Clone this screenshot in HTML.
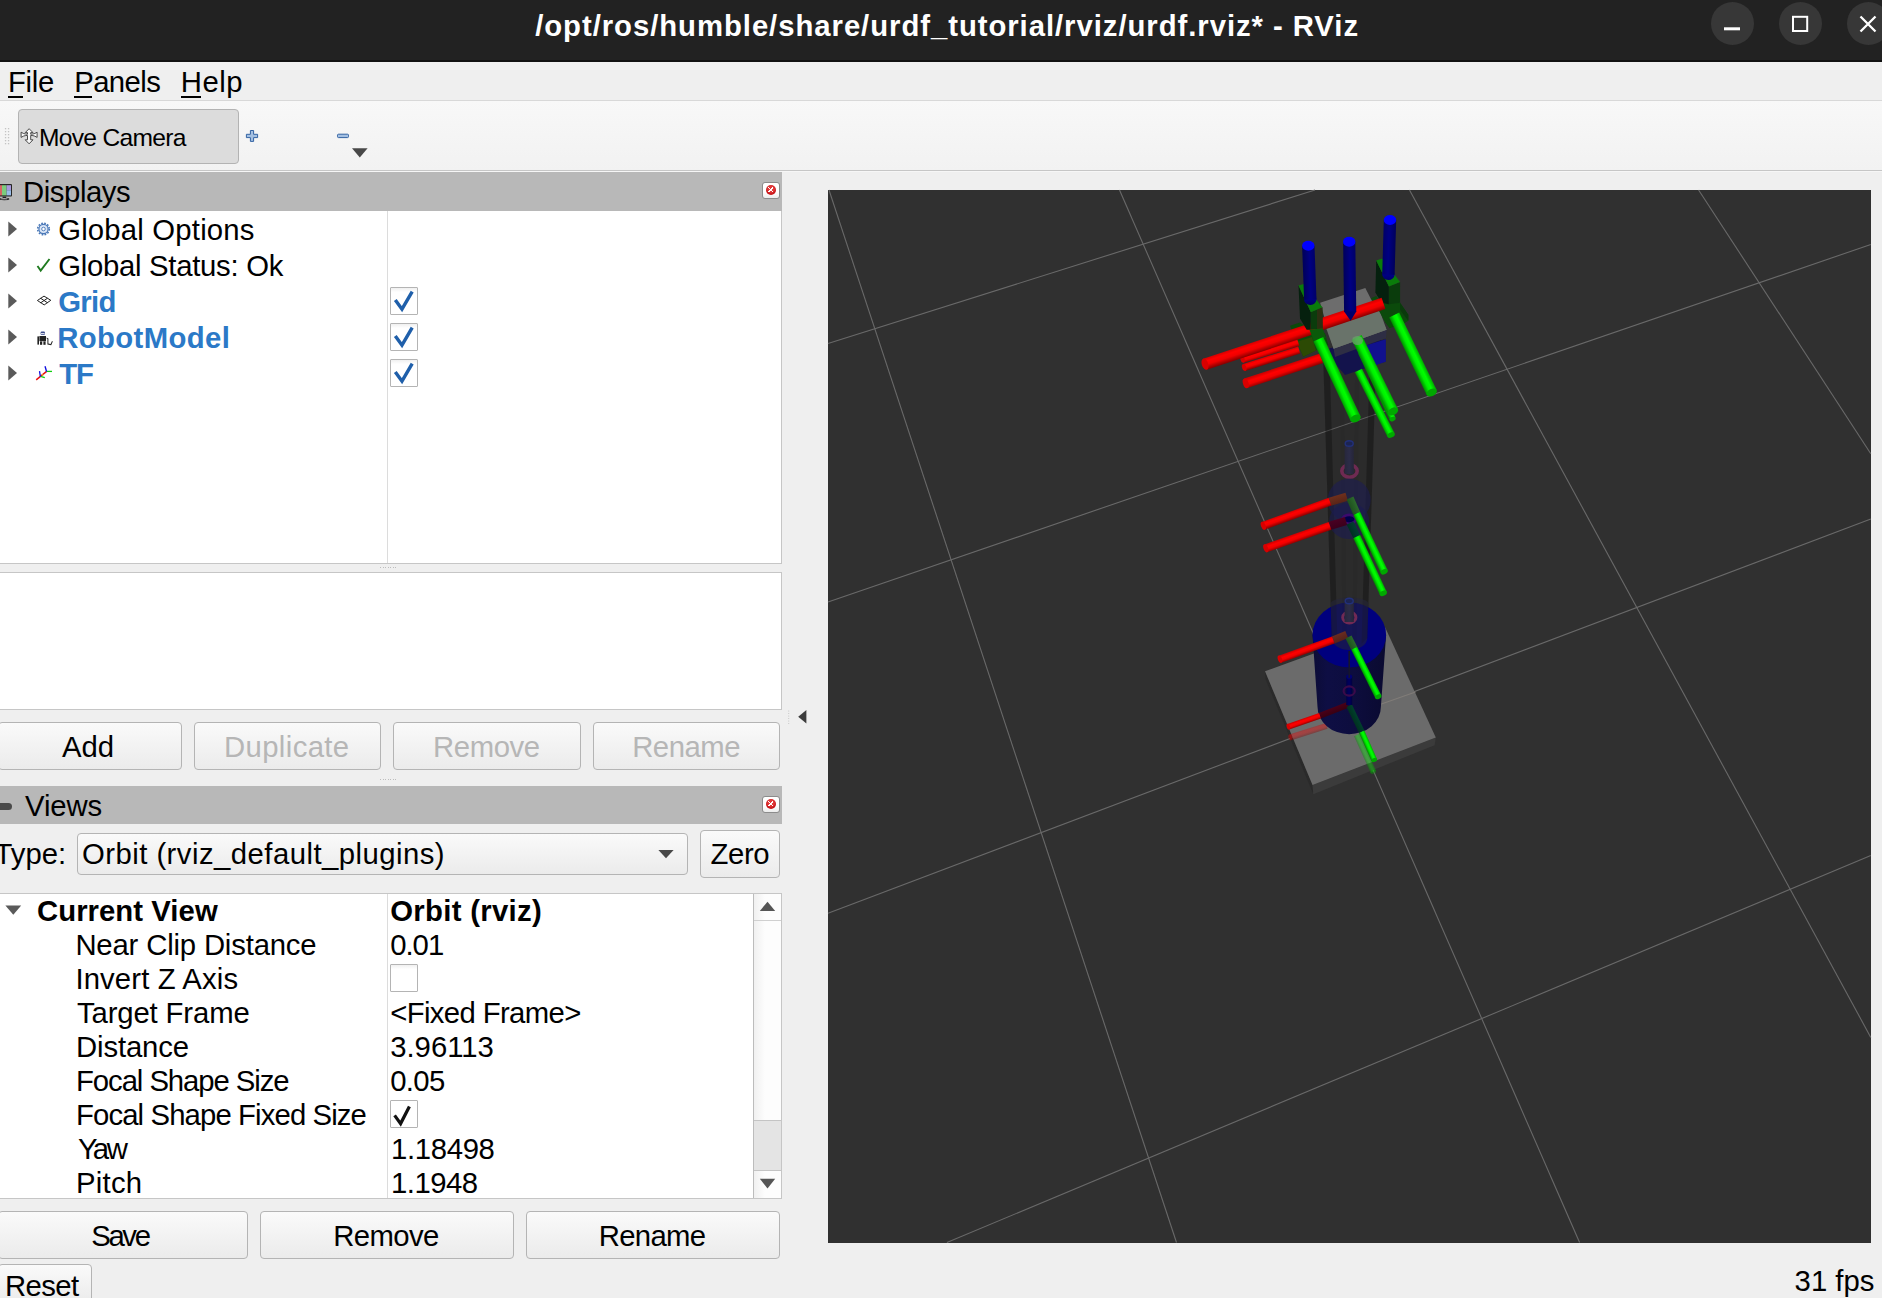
<!DOCTYPE html>
<html lang="en">
<head>
<meta charset="utf-8">
<title>RViz</title>
<style>
*{box-sizing:border-box;margin:0;padding:0}
html,body{width:1882px;height:1298px;overflow:hidden}
body{position:relative;background:#efefef;font-family:"Liberation Sans","DejaVu Sans",sans-serif;font-size:29.3px;color:#000}
.a{position:absolute}
.t{position:absolute;white-space:nowrap;line-height:1}
.t u{text-decoration:none}
.ul{position:absolute;height:2px;background:#000;top:96px}
#titlebar{left:0;top:0;width:1882px;height:62px;background:#222222;border-bottom:2px solid #111}
.wb{position:absolute;width:43px;height:43px;border-radius:50%;background:#373737;top:2px}
#menusep{left:0;top:100px;width:1882px;height:1px;background:#d8d8d8}
#toolbar{left:0;top:101px;width:1882px;height:69px;background:linear-gradient(#f8f8f8,#f2f2f2)}
#toolsep{left:0;top:170px;width:1882px;height:2px;background:linear-gradient(#c6c6c6 50%,#f6f6f6 50%)}
#toolbtn{left:18px;top:109px;width:221px;height:55px;border:1px solid #b3b3b3;border-radius:4px;background:#dcdcdc}
.hdr{position:absolute;left:0;width:782px;background:#b8b8b8}
.white{position:absolute;background:#fff;border:1px solid #c6c6c6}
.btn{position:absolute;border:1px solid #b4b4b4;border-radius:4px;background:linear-gradient(#fafafa,#ebebeb)}
.closeb{position:absolute;width:17.5px;height:16.8px;border:1px solid #8c8c8c;border-radius:3px;background:linear-gradient(#fff 60%,#ececec)}
.closeb i{position:absolute;left:2.6px;top:1.9px;width:10.4px;height:10.4px;border-radius:50%;background:linear-gradient(45deg,transparent 41%,#fff 41% 59%,transparent 59%) center/5.4px 5.4px no-repeat,linear-gradient(-45deg,transparent 41%,#fff 41% 59%,transparent 59%) center/5.4px 5.4px no-repeat,radial-gradient(circle at 50% 40%,#e23a3a 0 3px,#c81418 5px)}
.cb{position:absolute;width:28px;height:28px;border:1px solid #b4b4b4;background:linear-gradient(#f0f0f0,#fff 16%);border-radius:1px}
.vline{position:absolute;width:1px;background:#dcdcdc}
svg{position:absolute;overflow:visible}
</style>
</head>
<body>
<div id="titlebar" class="a"></div>
<div class="wb" style="left:1710.5px"></div>
<div class="wb" style="left:1778.5px"></div>
<div class="wb" style="left:1846.5px"></div>
<svg style="left:1700px;top:0" width="182" height="62" viewBox="1700 0 182 62">
<rect x="1724" y="27.3" width="16" height="3" fill="#fff"/>
<rect x="1793" y="16.8" width="14.2" height="14.2" fill="none" stroke="#fff" stroke-width="2"/>
<path d="M1860.5 16.5 L1875.5 31.5 M1875.5 16.5 L1860.5 31.5" stroke="#fff" stroke-width="2.3" fill="none"/>
</svg>
<div id="menusep" class="a"></div>
<div id="toolbar" class="a"></div>
<div id="toolsep" class="a"></div>
<div class="ul" style="left:8px;width:15px"></div>
<div class="ul" style="left:74px;width:18px"></div>
<div class="ul" style="left:181px;width:20px"></div>
<div id="toolbtn" class="a"></div>
<svg style="left:0;top:101px" width="400" height="69" viewBox="0 101 400 69">
<g fill="#c4c4c4"><rect x="4.9" y="128.0" width="1.3" height="1.3"/><rect x="7.9" y="128.0" width="1.3" height="1.3"/><rect x="4.9" y="131.0" width="1.3" height="1.3"/><rect x="7.9" y="131.0" width="1.3" height="1.3"/><rect x="4.9" y="134.0" width="1.3" height="1.3"/><rect x="7.9" y="134.0" width="1.3" height="1.3"/><rect x="4.9" y="137.0" width="1.3" height="1.3"/><rect x="7.9" y="137.0" width="1.3" height="1.3"/><rect x="4.9" y="140.0" width="1.3" height="1.3"/><rect x="7.9" y="140.0" width="1.3" height="1.3"/><rect x="4.9" y="143.0" width="1.3" height="1.3"/><rect x="7.9" y="143.0" width="1.3" height="1.3"/></g>
<g fill="#fafafa" stroke="#4a4a4a" stroke-width="1" stroke-linejoin="round"><path d="M29.1 128.7 l3.9 3.9 h-2.3 v1.6 c1.6 0 3 -0.3 4.2 -0.8 l2.2 -1.2 v5.2 l-2.2 -1.2 c-1.2 -0.5 -2.6 -0.8 -4.2 -0.8 v4.4 h2.3 l-3.9 4 l-3.9 -4 h2.3 v-4.4 c-1.6 0 -3 0.3 -4.2 0.8 l-2.2 1.2 v-5.2 l2.2 1.2 c1.2 0.5 2.6 0.8 4.2 0.8 v-1.6 h-2.3 z"/></g>
<path d="M250.4 130.5 h3.2 v3.8 h4 v3.3 h-4 v3.8 h-3.2 v-3.8 h-4 v-3.3 h4 z" fill="#a4c0e2" stroke="#3363a3" stroke-width="1"/>
<rect x="337.5" y="134.2" width="11" height="3.4" rx="1" fill="#a4c0e2" stroke="#3363a3" stroke-width="1"/>
<path d="M352 148.2 h15.6 l-7.8 9.2 z" fill="#484848"/>
</svg>
<!-- Displays panel -->
<div class="hdr" style="top:172px;height:39px"></div>
<div class="white" style="left:-1px;top:211px;width:783px;height:353px;border-top:none"></div>
<div class="vline" style="left:387px;top:211px;height:352px"></div>
<div class="closeb" style="left:762.2px;top:182px"><i></i></div>
<svg style="left:0;top:172px" width="60" height="220" viewBox="0 172 60 220">
<rect x="-3" y="184" width="15" height="12.6" rx="1" fill="#262626"/>
<rect x="-2" y="185.2" width="4" height="10.2" fill="#d66464"/><rect x="2" y="185.2" width="4.6" height="10.2" fill="#7ccc7c"/><rect x="6.6" y="185.2" width="4.4" height="5" fill="#a898dc"/><rect x="6.6" y="190.2" width="4.4" height="5.2" fill="#98bce8"/>
<path d="M2.6 196.6 h3.6 v1.6 h-3.6 z" fill="#222"/><ellipse cx="4.2" cy="199" rx="5.2" ry="1.2" fill="#222"/><ellipse cx="4.2" cy="198.7" rx="3.6" ry="0.5" fill="#ddd"/>
<g fill="#5a5a5a"><path d="M8.3 221.6 l8.7 7.4 l-8.7 7.4 z"/><path d="M8.3 257.6 l8.7 7.4 l-8.7 7.4 z"/><path d="M8.3 293.6 l8.7 7.4 l-8.7 7.4 z"/><path d="M8.3 329.6 l8.7 7.4 l-8.7 7.4 z"/><path d="M8.3 365.6 l8.7 7.4 l-8.7 7.4 z"/></g>
<circle cx="43.5" cy="229" r="4.6" fill="#dbe6f6" stroke="#4a78b8" stroke-width="1.2"/><circle cx="43.5" cy="229" r="5.8" fill="none" stroke="#4a78b8" stroke-width="1.6" stroke-dasharray="1.7 1.34"/><circle cx="43.5" cy="229" r="1.8" fill="#fff" stroke="#4a78b8" stroke-width="0.9"/>
<path d="M37.5 266 l3.2 4.6 l8.8 -11.6" fill="none" stroke="#1f7a1f" stroke-width="1.9"/>
<path d="M37.4 300.5 l6.6 -4.4 l6.8 4.2 l-6.6 4.6 z M40.7 298.3 l6.7 4.4 M47.4 298.3 l-6.7 4.5" fill="#fff" stroke="#222" stroke-width="1"/>
<g fill="#222"><rect x="40.6" y="331.6" width="4.4" height="3.4" rx="1.2" fill="#3c4c8c"/><rect x="41" y="333.2" width="3.6" height="1" fill="#fff"/><rect x="39.4" y="336" width="6.6" height="5.2"/><rect x="37.4" y="336.4" width="1.6" height="8.2"/><rect x="40" y="341.4" width="2.2" height="3.4"/><rect x="43.4" y="341.4" width="2.2" height="3.4"/><path d="M46.6 337.4 l1.8 1 v5 l2.2 0.6 l1.4 -3 l0.8 0.4 l-1.6 3.8 l-3.8 -0.8 v-5.4 l-0.8 -0.4 z"/></g>
<g fill="none" stroke-linecap="butt"><path d="M46.6 371.4 L36.2 379.8" stroke="#e81010" stroke-width="1.5"/><path d="M46.6 371.4 H52" stroke="#10d010" stroke-width="1.3"/><path d="M46.6 371.6 L45 366.2" stroke="#1010e0" stroke-width="1.4"/><path d="M40.6 376.4 L44.8 377.7" stroke="#10d010" stroke-width="1.3"/><path d="M40.4 376.6 L39.5 371.2" stroke="#1010e0" stroke-width="1.3"/><circle cx="42.6" cy="374.8" r="0.9" fill="#e8a020" stroke="none"/></g>
</svg>
<div class="cb" style="left:390px;top:287px"></div>
<div class="cb" style="left:390px;top:323px"></div>
<div class="cb" style="left:390px;top:359px"></div>
<svg style="left:390px;top:287px" width="28" height="100" viewBox="0 0 28 100">
<g fill="none" stroke="#1f5faa" stroke-width="3.4" stroke-linejoin="miter"><path d="M5.3 12.9 L12 22.2 L22.2 4.7"/><path d="M5.3 48.9 L12 58.2 L22.2 40.7"/><path d="M5.3 84.9 L12 94.2 L22.2 76.7"/></g>
</svg>
<!-- splitter dots + description box -->
<div class="a" style="left:380px;top:566.5px;width:16px;height:1px;background:repeating-linear-gradient(90deg,#bdbdbd 0 1px,transparent 1px 2.5px)"></div>
<div class="white" style="left:-1px;top:572px;width:783px;height:138px"></div>
<div class="btn" style="left:-2px;top:722px;width:184px;height:48px"></div>
<div class="btn" style="left:194px;top:722px;width:187px;height:48px"></div>
<div class="btn" style="left:393px;top:722px;width:188px;height:48px"></div>
<div class="btn" style="left:593px;top:722px;width:187px;height:48px"></div>
<div class="a" style="left:380px;top:779px;width:16px;height:1px;background:repeating-linear-gradient(90deg,#bdbdbd 0 1px,transparent 1px 2.5px)"></div>
<!-- Views panel -->
<div class="hdr" style="top:786px;height:37.5px"></div>
<div class="a" style="left:-3px;top:802.5px;width:14.5px;height:7.5px;border-radius:3.5px;background:#4a4a4a"></div>
<div class="closeb" style="left:762.2px;top:796px"><i></i></div>
<div class="btn" style="left:77px;top:833px;width:611px;height:42px"></div>
<div class="btn" style="left:700px;top:830px;width:80px;height:48px"></div>
<svg style="left:650px;top:840px" width="40" height="30" viewBox="650 840 40 30"><path d="M658.4 850 h15.2 l-7.6 8.2 z" fill="#484848"/></svg>
<div class="white" style="left:-1px;top:892.5px;width:783px;height:306px"></div>
<div class="vline" style="left:387px;top:893.5px;height:304px"></div>
<div class="a" style="left:753px;top:893.5px;width:28px;height:304px;background:linear-gradient(90deg,#f0f0f0,#fdfdfd 40%);border-left:1px solid #bcbcbc"></div>
<div class="a" style="left:754px;top:919.5px;width:27px;height:1px;background:#d0d0d0"></div>
<div class="a" style="left:754px;top:1120px;width:27px;height:50.5px;background:#e4e4e4;border-top:1px solid #c4c4c4;border-bottom:1px solid #c4c4c4"></div>
<svg style="left:0;top:893px" width="782" height="305" viewBox="0 893 782 305">
<path d="M5.4 905.4 h15.8 l-7.9 9.4 z" fill="#5a5a5a"/>
<path d="M759.8 911 h15.4 l-7.7 -9.2 z" fill="#555"/>
<path d="M759.8 1178.8 h15.4 l-7.7 9.6 z" fill="#555"/>
<path d="M394.6 1115.4 L400.6 1123.6 L409.4 1106.4" fill="none" stroke="#111" stroke-width="3.2"/>
</svg>
<div class="cb" style="left:390px;top:964px"></div>
<div class="cb" style="left:390px;top:1100px;background:transparent"></div>
<div class="btn" style="left:-2px;top:1211px;width:250px;height:48px"></div>
<div class="btn" style="left:260px;top:1211px;width:254px;height:48px"></div>
<div class="btn" style="left:526px;top:1211px;width:254px;height:48px"></div>
<div class="btn" style="left:-2px;top:1264px;width:94px;height:40px"></div>
<!-- collapse handle -->
<svg style="left:784px;top:700px" width="30" height="30" viewBox="784 700 30 30"><path d="M806.4 710 v13.6 l-8.2 -6.8 z" fill="#3c3c3c"/><g fill="#c4c4c4"><circle cx="788.7" cy="711" r="0.6"/><circle cx="788.7" cy="713.5" r="0.6"/><circle cx="788.7" cy="716" r="0.6"/><circle cx="788.7" cy="718.5" r="0.6"/><circle cx="788.7" cy="721" r="0.6"/><circle cx="788.7" cy="723.5" r="0.6"/></g></svg>

<div class="t" id="title" style="left:535.20px;top:11.00px;font-size:29.3px;letter-spacing:0.947px;font-weight:bold;color:#ffffff">/opt/ros/humble/share/urdf_tutorial/rviz/urdf.rviz* - RViz</div>
<div class="t" id="m_file" style="left:8.00px;top:67.00px;font-size:29.3px;letter-spacing:-0.333px"><u>F</u>ile</div>
<div class="t" id="m_panels" style="left:74.20px;top:67.00px;font-size:29.3px;letter-spacing:-0.600px"><u>P</u>anels</div>
<div class="t" id="m_help" style="left:180.80px;top:67.00px;font-size:29.3px;letter-spacing:0.500px"><u>H</u>elp</div>
<div class="t" id="movecam" style="left:39.00px;top:126.00px;font-size:24.6px;letter-spacing:-0.700px">Move Camera</div>
<div class="t" id="displays" style="left:23.00px;top:177.00px;font-size:29.3px;letter-spacing:-0.429px">Displays</div>
<div class="t" id="gopt" style="left:58.20px;top:215.00px;font-size:29.3px;letter-spacing:0.192px">Global Options</div>
<div class="t" id="gstat" style="left:58.20px;top:251.00px;font-size:29.3px;letter-spacing:-0.281px">Global Status: Ok</div>
<div class="t" id="grid" style="left:58.20px;top:287.00px;font-size:29.3px;letter-spacing:-0.667px;font-weight:bold;color:#2b79c7">Grid</div>
<div class="t" id="robot" style="left:57.20px;top:323.00px;font-size:29.3px;letter-spacing:0.389px;font-weight:bold;color:#2b79c7">RobotModel</div>
<div class="t" id="tf" style="left:59.20px;top:359.00px;font-size:29.3px;letter-spacing:-1.100px;font-weight:bold;color:#2b79c7">TF</div>
<div class="t" id="add" style="left:62.00px;top:732.00px;font-size:29.3px;letter-spacing:0.000px">Add</div>
<div class="t" id="dup" style="left:224.00px;top:732.00px;font-size:29.3px;letter-spacing:0.375px;color:#b6b6b6">Duplicate</div>
<div class="t" id="rem1" style="left:433.00px;top:732.00px;font-size:29.3px;letter-spacing:-0.400px;color:#b6b6b6">Remove</div>
<div class="t" id="ren1" style="left:632.20px;top:732.00px;font-size:29.3px;letter-spacing:-0.500px;color:#b6b6b6">Rename</div>
<div class="t" id="views" style="left:25.00px;top:791.00px;font-size:29.3px;letter-spacing:-0.125px">Views</div>
<div class="t" id="type" style="left:-5.50px;top:839.00px;font-size:29.3px;letter-spacing:0.000px">Type:</div>
<div class="t" id="combo" style="left:82.00px;top:839.00px;font-size:29.3px;letter-spacing:0.463px">Orbit (rviz_default_plugins)</div>
<div class="t" id="zero" style="left:710.40px;top:839.00px;font-size:29.3px;letter-spacing:-0.333px">Zero</div>
<div class="t" id="cv" style="left:37.00px;top:896.00px;font-size:29.3px;letter-spacing:0.045px;font-weight:bold">Current View</div>
<div class="t" id="ncd" style="left:75.40px;top:930.00px;font-size:29.3px;letter-spacing:-0.176px">Near Clip Distance</div>
<div class="t" id="iza" style="left:75.40px;top:964.00px;font-size:29.3px;letter-spacing:0.125px">Invert Z Axis</div>
<div class="t" id="tfr" style="left:77.00px;top:998.00px;font-size:29.3px;letter-spacing:-0.136px">Target Frame</div>
<div class="t" id="dist" style="left:76.00px;top:1032.00px;font-size:29.3px;letter-spacing:-0.143px">Distance</div>
<div class="t" id="fss" style="left:76.00px;top:1066.00px;font-size:29.3px;letter-spacing:-1.067px">Focal Shape Size</div>
<div class="t" id="fsfs" style="left:76.00px;top:1100.00px;font-size:29.3px;letter-spacing:-0.881px">Focal Shape Fixed Size</div>
<div class="t" id="yaw" style="left:78.00px;top:1134.00px;font-size:29.3px;letter-spacing:-2.500px">Yaw</div>
<div class="t" id="pitch" style="left:76.00px;top:1168.00px;font-size:29.3px;letter-spacing:0.250px">Pitch</div>
<div class="t" id="v_cv" style="left:390.20px;top:896.00px;font-size:29.3px;letter-spacing:0.318px;font-weight:bold">Orbit (rviz)</div>
<div class="t" id="v_ncd" style="left:390.20px;top:930.00px;font-size:29.3px;letter-spacing:-1.000px">0.01</div>
<div class="t" id="v_tfr" style="left:390.20px;top:998.00px;font-size:29.3px;letter-spacing:-0.625px">&lt;Fixed Frame&gt;</div>
<div class="t" id="v_dist" style="left:390.20px;top:1032.00px;font-size:29.3px;letter-spacing:0.000px">3.96113</div>
<div class="t" id="v_fss" style="left:390.20px;top:1066.00px;font-size:29.3px;letter-spacing:-0.667px">0.05</div>
<div class="t" id="v_yaw" style="left:391.00px;top:1134.00px;font-size:29.3px;letter-spacing:-0.333px">1.18498</div>
<div class="t" id="v_pitch" style="left:391.00px;top:1168.00px;font-size:29.3px;letter-spacing:-0.500px">1.1948</div>
<div class="t" id="save" style="left:91.20px;top:1221.00px;font-size:29.3px;letter-spacing:-2.333px">Save</div>
<div class="t" id="rem2" style="left:333.20px;top:1221.00px;font-size:29.3px;letter-spacing:-0.600px">Remove</div>
<div class="t" id="ren2" style="left:598.80px;top:1221.00px;font-size:29.3px;letter-spacing:-0.700px">Rename</div>
<div class="t" id="reset" style="left:5.00px;top:1271.00px;font-size:29.3px;letter-spacing:-0.625px">Reset</div>
<div class="t" id="fps" style="left:1794.60px;top:1266.00px;font-size:29.3px;letter-spacing:0.000px">31 fps</div>
<svg id="vp" style="left:828px;top:190px" width="1043" height="1053" viewBox="828 190 1043 1053">
<defs><linearGradient id="g1" gradientUnits="userSpaceOnUse" x1="1325.8" y1="722.9" x2="1327.6" y2="728.7"><stop offset="0" stop-color="#d00000"/><stop offset="0.3" stop-color="#ff0000"/><stop offset="0.6" stop-color="#f00000"/><stop offset="1" stop-color="#8a0000"/></linearGradient><linearGradient id="g2" gradientUnits="userSpaceOnUse" x1="1359.4" y1="733.8" x2="1354" y2="736.2"><stop offset="0" stop-color="#00b000"/><stop offset="0.35" stop-color="#00ff00"/><stop offset="0.6" stop-color="#00f000"/><stop offset="1" stop-color="#008800"/></linearGradient><linearGradient id="bc" x1="0" y1="0" x2="1" y2="0"><stop offset="0" stop-color="#0c0c36"/><stop offset="0.2" stop-color="#0e0e44"/><stop offset="0.55" stop-color="#0d0d3e"/><stop offset="1" stop-color="#0a0a30"/></linearGradient><linearGradient id="g3" gradientUnits="userSpaceOnUse" x1="1346.4" y1="702.2" x2="1348.6" y2="707.8"><stop offset="0" stop-color="#4a0018"/><stop offset="1" stop-color="#380012"/></linearGradient><linearGradient id="g4" gradientUnits="userSpaceOnUse" x1="1351.9" y1="704.5" x2="1346.5" y2="707.1"><stop offset="0" stop-color="#00402c"/><stop offset="1" stop-color="#003020"/></linearGradient><linearGradient id="g5" gradientUnits="userSpaceOnUse" x1="1319" y1="713" x2="1321" y2="718.6"><stop offset="0" stop-color="#d00000"/><stop offset="0.3" stop-color="#ff0000"/><stop offset="0.6" stop-color="#f00000"/><stop offset="1" stop-color="#8a0000"/></linearGradient><linearGradient id="g6" gradientUnits="userSpaceOnUse" x1="1364.4" y1="730.5" x2="1359" y2="732.9"><stop offset="0" stop-color="#00b000"/><stop offset="0.35" stop-color="#00ff00"/><stop offset="0.6" stop-color="#00f000"/><stop offset="1" stop-color="#008800"/></linearGradient><linearGradient id="g7" gradientUnits="userSpaceOnUse" x1="1346.2" y1="705" x2="1352.2" y2="705"><stop offset="0" stop-color="#000048"/><stop offset="0.5" stop-color="#000060"/><stop offset="1" stop-color="#000040"/></linearGradient><linearGradient id="g8" gradientUnits="userSpaceOnUse" x1="1344.6" y1="474" x2="1353.8" y2="474"><stop offset="0" stop-color="#27273c"/><stop offset="0.5" stop-color="#2c2c48"/><stop offset="1" stop-color="#252538"/></linearGradient><linearGradient id="g9" gradientUnits="userSpaceOnUse" x1="1345.5" y1="492.7" x2="1347.9" y2="500.7"><stop offset="0" stop-color="#70301c"/><stop offset="1" stop-color="#582418"/></linearGradient><linearGradient id="g10" gradientUnits="userSpaceOnUse" x1="1344.8" y1="517" x2="1347.2" y2="525"><stop offset="0" stop-color="#4a0022"/><stop offset="1" stop-color="#3a001c"/></linearGradient><linearGradient id="g11" gradientUnits="userSpaceOnUse" x1="1328.6" y1="497.8" x2="1331.4" y2="505.6"><stop offset="0" stop-color="#d00000"/><stop offset="0.3" stop-color="#ff0000"/><stop offset="0.6" stop-color="#f00000"/><stop offset="1" stop-color="#8a0000"/></linearGradient><linearGradient id="g12" gradientUnits="userSpaceOnUse" x1="1328.6" y1="521.9" x2="1331.4" y2="529.7"><stop offset="0" stop-color="#d00000"/><stop offset="0.3" stop-color="#ff0000"/><stop offset="0.6" stop-color="#f00000"/><stop offset="1" stop-color="#8a0000"/></linearGradient><linearGradient id="g13" gradientUnits="userSpaceOnUse" x1="1353.4" y1="496.5" x2="1346.6" y2="499.5"><stop offset="0" stop-color="#2c6a2c"/><stop offset="1" stop-color="#1e501e"/></linearGradient><linearGradient id="g14" gradientUnits="userSpaceOnUse" x1="1353.4" y1="521.4" x2="1346.6" y2="524.6"><stop offset="0" stop-color="#004030"/><stop offset="1" stop-color="#003024"/></linearGradient><linearGradient id="g15" gradientUnits="userSpaceOnUse" x1="1360.1" y1="511.7" x2="1353.3" y2="514.9"><stop offset="0" stop-color="#00b000"/><stop offset="0.35" stop-color="#00ff00"/><stop offset="0.6" stop-color="#00f000"/><stop offset="1" stop-color="#008800"/></linearGradient><linearGradient id="g16" gradientUnits="userSpaceOnUse" x1="1360.1" y1="535.1" x2="1353.3" y2="538.3"><stop offset="0" stop-color="#00b000"/><stop offset="0.35" stop-color="#00ff00"/><stop offset="0.6" stop-color="#00f000"/><stop offset="1" stop-color="#008800"/></linearGradient><linearGradient id="g17" gradientUnits="userSpaceOnUse" x1="1344.6" y1="622" x2="1353.8" y2="622"><stop offset="0" stop-color="#27273c"/><stop offset="0.5" stop-color="#2c2c48"/><stop offset="1" stop-color="#252538"/></linearGradient><linearGradient id="g18" gradientUnits="userSpaceOnUse" x1="1345.3" y1="631" x2="1348.1" y2="638"><stop offset="0" stop-color="#6a2c20"/><stop offset="1" stop-color="#54221a"/></linearGradient><linearGradient id="g19" gradientUnits="userSpaceOnUse" x1="1332" y1="636.5" x2="1334.6" y2="643.5"><stop offset="0" stop-color="#d00000"/><stop offset="0.3" stop-color="#ff0000"/><stop offset="0.6" stop-color="#f00000"/><stop offset="1" stop-color="#8a0000"/></linearGradient><linearGradient id="g20" gradientUnits="userSpaceOnUse" x1="1351.5" y1="635.5" x2="1345.5" y2="638.5"><stop offset="0" stop-color="#2a6a2a"/><stop offset="1" stop-color="#1e501e"/></linearGradient><linearGradient id="g21" gradientUnits="userSpaceOnUse" x1="1357.2" y1="646.8" x2="1351.2" y2="649.8"><stop offset="0" stop-color="#00b000"/><stop offset="0.35" stop-color="#00ff00"/><stop offset="0.6" stop-color="#00f000"/><stop offset="1" stop-color="#008800"/></linearGradient><linearGradient id="g22" gradientUnits="userSpaceOnUse" x1="1381.6" y1="297.7" x2="1385.4" y2="309.1"><stop offset="0" stop-color="#d00000"/><stop offset="0.3" stop-color="#ff0000"/><stop offset="0.6" stop-color="#f00000"/><stop offset="1" stop-color="#8a0000"/></linearGradient><linearGradient id="g23" gradientUnits="userSpaceOnUse" x1="1297.2" y1="339" x2="1299.4" y2="346"><stop offset="0" stop-color="#d00000"/><stop offset="0.3" stop-color="#ff0000"/><stop offset="0.6" stop-color="#f00000"/><stop offset="1" stop-color="#8a0000"/></linearGradient><linearGradient id="g24" gradientUnits="userSpaceOnUse" x1="1298.1" y1="346.5" x2="1300.3" y2="353.5"><stop offset="0" stop-color="#d00000"/><stop offset="0.3" stop-color="#ff0000"/><stop offset="0.6" stop-color="#f00000"/><stop offset="1" stop-color="#8a0000"/></linearGradient><linearGradient id="g25" gradientUnits="userSpaceOnUse" x1="1320.1" y1="353.6" x2="1323.3" y2="363"><stop offset="0" stop-color="#d00000"/><stop offset="0.3" stop-color="#ff0000"/><stop offset="0.6" stop-color="#f00000"/><stop offset="1" stop-color="#8a0000"/></linearGradient><linearGradient id="g26" gradientUnits="userSpaceOnUse" x1="1310.2" y1="323.3" x2="1313.8" y2="334.3"><stop offset="0" stop-color="#d00000"/><stop offset="0.3" stop-color="#ff0000"/><stop offset="0.6" stop-color="#f00000"/><stop offset="1" stop-color="#8a0000"/></linearGradient><linearGradient id="g27" gradientUnits="userSpaceOnUse" x1="1316.5" y1="299.3" x2="1304.1" y2="299.7"><stop offset="0" stop-color="#000068"/><stop offset="0.45" stop-color="#000082"/><stop offset="1" stop-color="#00005a"/></linearGradient><linearGradient id="g28" gradientUnits="userSpaceOnUse" x1="1382.2" y1="274.3" x2="1394.6" y2="274.7"><stop offset="0" stop-color="#000068"/><stop offset="0.45" stop-color="#000082"/><stop offset="1" stop-color="#00005a"/></linearGradient><linearGradient id="g29" gradientUnits="userSpaceOnUse" x1="1356.3" y1="311.9" x2="1344.1" y2="312.1"><stop offset="0" stop-color="#000068"/><stop offset="0.45" stop-color="#000082"/><stop offset="1" stop-color="#00005a"/></linearGradient><linearGradient id="g30" gradientUnits="userSpaceOnUse" x1="1323.3" y1="336.9" x2="1313.3" y2="341.5"><stop offset="0" stop-color="#00b000"/><stop offset="0.35" stop-color="#00ff00"/><stop offset="0.6" stop-color="#00f000"/><stop offset="1" stop-color="#008800"/></linearGradient><linearGradient id="g31" gradientUnits="userSpaceOnUse" x1="1363.9" y1="350.6" x2="1358.1" y2="353.4"><stop offset="0" stop-color="#00b000"/><stop offset="0.35" stop-color="#00ff00"/><stop offset="0.6" stop-color="#00f000"/><stop offset="1" stop-color="#008800"/></linearGradient><linearGradient id="g32" gradientUnits="userSpaceOnUse" x1="1362" y1="368.7" x2="1354.8" y2="372.3"><stop offset="0" stop-color="#00b000"/><stop offset="0.35" stop-color="#00ff00"/><stop offset="0.6" stop-color="#00f000"/><stop offset="1" stop-color="#008800"/></linearGradient><linearGradient id="g33" gradientUnits="userSpaceOnUse" x1="1361.6" y1="335.1" x2="1351.8" y2="339.9"><stop offset="0" stop-color="#00b000"/><stop offset="0.35" stop-color="#00ff00"/><stop offset="0.6" stop-color="#00f000"/><stop offset="1" stop-color="#008800"/></linearGradient><linearGradient id="g34" gradientUnits="userSpaceOnUse" x1="1399.2" y1="312.6" x2="1389.2" y2="317.4"><stop offset="0" stop-color="#00b000"/><stop offset="0.35" stop-color="#00ff00"/><stop offset="0.6" stop-color="#00f000"/><stop offset="1" stop-color="#008800"/></linearGradient></defs>
<rect x="828" y="190" width="1043" height="1053" fill="#303030"/>
<line x1="829" y1="190" x2="1176.5" y2="1242.5" stroke="#696969" stroke-width="1.1"/>
<line x1="1119.5" y1="190" x2="1579.6" y2="1242.5" stroke="#696969" stroke-width="1.1"/>
<line x1="1409.5" y1="190" x2="1870.8" y2="1037.4" stroke="#696969" stroke-width="1.1"/>
<line x1="1698.6" y1="190" x2="1870.8" y2="453.7" stroke="#696969" stroke-width="1.1"/>
<line x1="828" y1="343.5" x2="1315" y2="190" stroke="#696969" stroke-width="1.1"/>
<line x1="828" y1="602" x2="1870.8" y2="244.5" stroke="#696969" stroke-width="1.1"/>
<line x1="828" y1="913.2" x2="1870.8" y2="519" stroke="#696969" stroke-width="1.1"/>
<line x1="946.9" y1="1242.5" x2="1870.8" y2="855.6" stroke="#696969" stroke-width="1.1"/>
<polygon points="1265,671.2 1312.5,785 1313.3,794.2 1265.6,679.5" fill="#2a2a2a"/>
<polygon points="1312.5,785 1435.8,737.5 1434.6,745.2 1313.3,794.2" fill="#3b3b3b"/>
<polygon points="1265,671.2 1385.2,627.5 1435.8,737.5 1312.5,785" fill="#6b6b6b"/>
<line x1="1380" y1="704.6" x2="1415.5" y2="692" stroke="#807c78" stroke-width="1.1"/>
<polygon points="1325.8,722.9 1289.1,734.6 1290.9,740.4 1327.6,728.7" fill="url(#g1)" opacity="0.38"/>
<ellipse cx="1290" cy="737.5" rx="1.7" ry="3" fill="#d80000" transform="rotate(162.3 1290 737.5)" opacity="0.38"/>
<polygon points="1359.4,733.8 1376,770.5 1370.6,772.9 1354,736.2" fill="url(#g2)" opacity="0.38"/>
<ellipse cx="1373.3" cy="771.7" rx="2" ry="3" fill="#00a800" transform="rotate(65.7 1373.3 771.7)" opacity="0.38"/>
<path d="M1312.5 635 L1317.5 706.7 A31.7 27.5 0 0 0 1380.9 706.7 L1386.1 635 Z" fill="url(#bc)"/>
<polygon points="1346.4,702.2 1318.9,713 1321.1,718.6 1348.6,707.8" fill="url(#g3)"/>
<polygon points="1351.9,704.5 1364.4,730.4 1359,733 1346.5,707.1" fill="url(#g4)"/>
<polygon points="1319,713 1287.3,723.9 1289.3,729.5 1321,718.6" fill="url(#g5)"/>
<ellipse cx="1288.3" cy="726.7" rx="1.7" ry="3" fill="#d80000" transform="rotate(161 1288.3 726.7)"/>
<polygon points="1364.4,730.5 1376.9,758.8 1371.5,761.2 1359,732.9" fill="url(#g6)"/>
<ellipse cx="1374.2" cy="760" rx="2" ry="3" fill="#00a800" transform="rotate(66.2 1374.2 760)"/>
<ellipse cx="1349.3" cy="635" rx="36.8" ry="32.5" fill="#00007e"/>
<polygon points="1346.2,705 1346.2,676.7 1352.2,676.7 1352.2,705" fill="url(#g7)"/>
<ellipse cx="1349.2" cy="676.7" rx="3" ry="2.2" fill="#000070"/>
<ellipse cx="1349.2" cy="691" rx="5.6" ry="4.6" fill="none" stroke="#3a0a4a" stroke-width="2.2"/>
<path d="M1323 352 L1331.7 638 A17.8 12 0 0 0 1367.3 638 L1376.4 352 Z" fill="#000" opacity="0.09"/>
<path d="M1323 352 L1331.7 638 L1337.5 644 L1329.5 352 Z" fill="#000" opacity="0.27"/>
<path d="M1376.4 352 L1367.3 638 L1361.5 644 L1370 352 Z" fill="#000" opacity="0.27"/>
<path d="M1330.6 603 L1331.7 638 A17.8 12 0 0 0 1367.3 638 L1368.4 603 A19 6 0 0 0 1330.6 603 Z" fill="#26263c" opacity="0.55"/>
<line x1="1342" y1="380" x2="1344.5" y2="640" stroke="#000" stroke-width="4" opacity="0.04"/>
<line x1="1357" y1="380" x2="1354.5" y2="640" stroke="#000" stroke-width="4" opacity="0.04"/>
<ellipse cx="1349.5" cy="471" rx="7.7" ry="6.2" fill="none" stroke="#6e2a52" stroke-width="3.6"/>
<polygon points="1344.6,474 1344.6,443.5 1353.8,443.5 1353.8,474" fill="url(#g8)"/>
<ellipse cx="1349.2" cy="443.5" rx="4" ry="2.8" fill="#1c2452" stroke="#22307a" stroke-width="1.4"/>
<ellipse cx="1349.2" cy="500" rx="21.5" ry="21.5" fill="#1c1c56" opacity="0.55"/>
<ellipse cx="1349.2" cy="521" rx="20" ry="18" fill="#1a1a52" opacity="0.6"/>
<ellipse cx="1349.1" cy="519.3" rx="6.6" ry="4.4" fill="#00004a" stroke="#3c0a6e" stroke-width="2.6"/>
<polygon points="1345.5,492.7 1328.8,497.7 1331.2,505.7 1347.9,500.7" fill="url(#g9)"/>
<polygon points="1344.8,517 1328.8,521.8 1331.2,529.8 1347.2,525" fill="url(#g10)"/>
<polygon points="1328.6,497.8 1261.9,521.9 1264.7,529.7 1331.4,505.6" fill="url(#g11)"/>
<ellipse cx="1263.3" cy="525.8" rx="2.3" ry="4.2" fill="#d80000" transform="rotate(160.1 1263.3 525.8)"/>
<polygon points="1328.6,521.9 1264.4,544.4 1267.2,552.2 1331.4,529.7" fill="url(#g12)"/>
<ellipse cx="1265.8" cy="548.3" rx="2.3" ry="4.2" fill="#d80000" transform="rotate(160.7 1265.8 548.3)"/>
<polygon points="1353.4,496.5 1360.1,511.8 1353.3,514.8 1346.6,499.5" fill="url(#g13)"/>
<polygon points="1353.4,521.4 1360.1,535.1 1353.3,538.3 1346.6,524.6" fill="url(#g14)"/>
<polygon points="1360.1,511.7 1387.6,570.1 1380.8,573.3 1353.3,514.9" fill="url(#g15)"/>
<ellipse cx="1384.2" cy="571.7" rx="2.5" ry="3.8" fill="#00a800" transform="rotate(64.8 1384.2 571.7)"/>
<polygon points="1360.1,535.1 1386.7,591.7 1379.9,594.9 1353.3,538.3" fill="url(#g16)"/>
<ellipse cx="1383.3" cy="593.3" rx="2.5" ry="3.8" fill="#00a800" transform="rotate(64.8 1383.3 593.3)"/>
<ellipse cx="1349.3" cy="617.5" rx="6.6" ry="5.4" fill="none" stroke="#702a54" stroke-width="3"/>
<polygon points="1344.6,622 1344.6,601 1353.8,601 1353.8,622" fill="url(#g17)"/>
<ellipse cx="1349.2" cy="601" rx="4" ry="2.8" fill="#1c2452" stroke="#22307a" stroke-width="1.4"/>
<line x1="1349.2" y1="651" x2="1349.2" y2="678" stroke="#15152c" stroke-width="1.6"/>
<polygon points="1345.3,631 1331.9,636.5 1334.7,643.5 1348.1,638" fill="url(#g18)"/>
<polygon points="1332,636.5 1278.7,655.7 1281.3,662.7 1334.6,643.5" fill="url(#g19)"/>
<ellipse cx="1280" cy="659.2" rx="2.1" ry="3.8" fill="#d80000" transform="rotate(160.2 1280 659.2)"/>
<polygon points="1351.5,635.5 1357.2,646.8 1351.2,649.8 1345.5,638.5" fill="url(#g20)"/>
<polygon points="1357.2,646.8 1381.3,695.2 1375.3,698.2 1351.2,649.8" fill="url(#g21)"/>
<ellipse cx="1378.3" cy="696.7" rx="2.2" ry="3.4" fill="#00a800" transform="rotate(63.5 1378.3 696.7)"/>
<polygon points="1329.2,348.3 1385.8,339.2 1385.8,361.7 1375,365 1345,375 1331.7,360" fill="#13134c"/>
<polygon points="1366,345.5 1385.8,339.2 1385.8,361.7 1376,365" fill="#1212a4" opacity="0.75"/>
<polygon points="1333.6,348.8 1386.6,329.7 1386,338 1335,357" fill="#2e2e44"/>
<polygon points="1320.1,302.8 1365.3,287.9 1386.6,329.7 1333.6,348.8" fill="#6d6d6d"/>
<polygon points="1325,325 1378,306 1386.6,329.7 1333.6,348.8" fill="#69736a"/>
<polygon points="1371,298.3 1376.2,296.1 1381.4,302.8 1400.1,302.8 1408.3,314.8 1408.3,320.8 1404.6,323 1389.6,328.2 1385.1,322.3 1379.9,312.5" fill="#0b4a0b"/>
<polygon points="1400.1,302.8 1408.3,314.8 1408.3,320.8 1400.1,310" fill="#0a3a0c"/>
<polygon points="1376.2,260.6 1388.9,286.4 1388.9,304.3 1381.4,302.8 1375.4,292.4" fill="#05200e"/>
<polygon points="1388.9,286.4 1400.1,281.9 1400.1,302.8 1388.9,304.3" fill="#0a3c0c"/>
<polygon points="1376.2,260.6 1382.2,258.4 1400.1,281.9 1388.9,286.4" fill="#0a7c0a"/>
<polygon points="1381.6,297.7 1312.1,321.1 1315.9,332.5 1385.4,309.1" fill="url(#g22)"/>
<ellipse cx="1314" cy="326.8" rx="3.4" ry="6" fill="#d80000" transform="rotate(161.4 1314 326.8)"/>
<polygon points="1290,325.8 1300,322.5 1313.3,331.7 1325,333.3 1328.3,345 1313.3,351.7 1303.3,356.7 1296.7,341.7" fill="#0b4a0b"/>
<polygon points="1296.7,341.7 1312,337 1316,350.5 1303.3,356.7" fill="#2c4a04"/>
<polygon points="1297.2,339 1241.4,355.7 1243.6,362.7 1299.4,346" fill="url(#g23)"/>
<ellipse cx="1242.5" cy="359.2" rx="2.1" ry="3.7" fill="#d80000" transform="rotate(163.3 1242.5 359.2)"/>
<polygon points="1298.1,346.5 1243.1,364 1245.3,371 1300.3,353.5" fill="url(#g24)"/>
<ellipse cx="1244.2" cy="367.5" rx="2.1" ry="3.7" fill="#d80000" transform="rotate(162.3 1244.2 367.5)"/>
<polygon points="1320.1,353.6 1244.2,378.6 1247.4,388 1323.3,363" fill="url(#g25)"/>
<ellipse cx="1245.8" cy="383.3" rx="2.8" ry="5" fill="#d80000" transform="rotate(161.8 1245.8 383.3)"/>
<polygon points="1310.2,323.3 1203.2,358.7 1206.8,369.7 1313.8,334.3" fill="url(#g26)"/>
<ellipse cx="1205" cy="364.2" rx="3.2" ry="5.8" fill="#d80000" transform="rotate(161.7 1205 364.2)"/>
<polygon points="1298.5,285.6 1305.9,301.3 1310.8,312.2 1310.8,329.7 1306.7,329.7 1300,318.5" fill="#05200e"/>
<polygon points="1310.8,312.2 1322.4,307.3 1322.7,328.2 1310.8,329.7" fill="#0a3c0c"/>
<polygon points="1317,309.5 1322.4,307.3 1322.7,328.2 1317,329" fill="#3a2a14" opacity="0.7"/>
<polygon points="1298.5,285.6 1303.7,284 1322.4,307.3 1310.8,312.2" fill="#0a7c0a"/>
<polygon points="1309.5,329.7 1322.7,328.2 1326,338 1314,342" fill="#0a5a0a"/>
<ellipse cx="1310.3" cy="299.5" rx="5.6" ry="6.2" fill="url(#g27)" transform="rotate(-92.1 1310.3 299.5)"/>
<polygon points="1316.5,299.3 1314.5,245.6 1302.1,246 1304.1,299.7" fill="url(#g27)"/>
<ellipse cx="1308.3" cy="245.8" rx="6.2" ry="5" fill="#0000ff"/>
<ellipse cx="1388.4" cy="274.5" rx="5.6" ry="6.2" fill="url(#g28)" transform="rotate(-88.3 1388.4 274.5)"/>
<polygon points="1382.2,274.3 1383.8,219.8 1396.2,220.2 1394.6,274.7" fill="url(#g28)"/>
<ellipse cx="1390" cy="220" rx="6.2" ry="5" fill="#0000ff"/>
<polygon points="1356.3,311.9 1355.3,241.6 1343.1,241.8 1344.1,312.1" fill="url(#g29)"/>
<polygon points="1344.1,311.5 1356.3,311.5 1350.6,320.8" fill="#00006a"/>
<ellipse cx="1349.2" cy="241.7" rx="6.2" ry="5" fill="#0000ff"/>
<polygon points="1323.3,336.9 1360.5,416.2 1350.5,420.8 1313.3,341.5" fill="url(#g30)"/>
<ellipse cx="1355.5" cy="418.5" rx="3.6" ry="5.5" fill="#00a800" transform="rotate(64.9 1355.5 418.5)"/>
<polygon points="1363.9,350.6 1395.5,417.6 1389.7,420.4 1358.1,353.4" fill="url(#g31)"/>
<ellipse cx="1392.6" cy="419" rx="2.1" ry="3.2" fill="#00a800" transform="rotate(64.7 1392.6 419)"/>
<polygon points="1362,368.7 1394.6,433.2 1387.4,436.8 1354.8,372.3" fill="url(#g32)"/>
<ellipse cx="1391" cy="435" rx="2.6" ry="4" fill="#00a800" transform="rotate(63.2 1391 435)"/>
<polygon points="1361.6,335.1 1397.9,409 1388.1,413.8 1351.8,339.9" fill="url(#g33)"/>
<ellipse cx="1393" cy="411.4" rx="3.6" ry="5.5" fill="#00a800" transform="rotate(63.8 1393 411.4)"/>
<polygon points="1399.2,312.6 1436.7,390.1 1426.7,394.9 1389.2,317.4" fill="url(#g34)"/>
<ellipse cx="1431.7" cy="392.5" rx="3.6" ry="5.5" fill="#00a800" transform="rotate(64.2 1431.7 392.5)"/>
<ellipse cx="1357.5" cy="340.5" rx="5.5" ry="4.6" fill="#66a066" opacity="0.8"/>
</svg>

</body>
</html>
